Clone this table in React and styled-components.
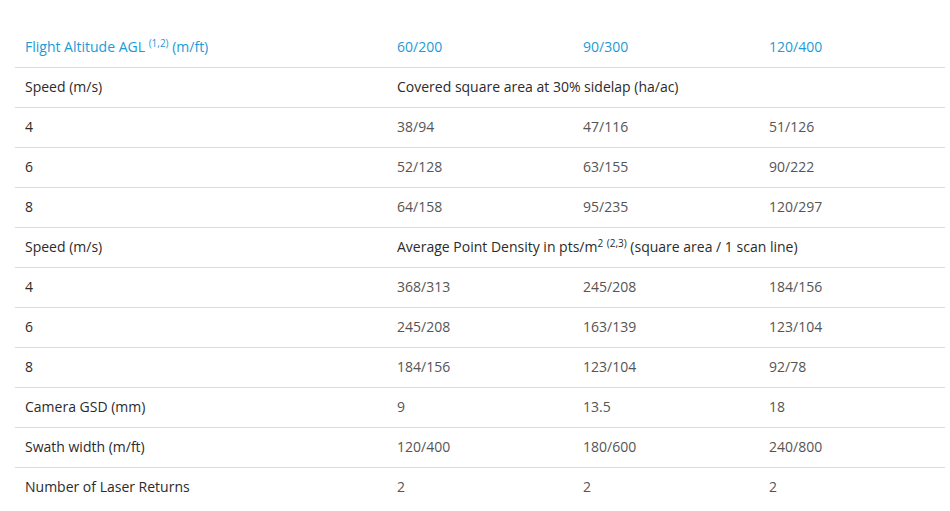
import React from 'react';
import styled, { createGlobalStyle } from 'styled-components';

const GlobalStyle = createGlobalStyle`
  body {
    margin: 0;
    background: #fff;
    font-family: "Open Sans", "Noto Sans", sans-serif;
  }
`;

const Page = styled.div`
  padding: 27px 5px 0 15px;
`;

const Table = styled.table`
  width: 930px;
  border-collapse: collapse;
  table-layout: fixed;
  font-size: 14px;
`;

const Col = styled.col`
  width: ${({ wide }) => (wide ? '372px' : '186px')};
`;

const Row = styled.tr`
  height: 40px;
  border-bottom: ${({ last }) => (last ? 'none' : '1px solid #dcdcdc')};
`;

const Cell = styled.td`
  padding: 0 10px 2px;
  vertical-align: middle;
  color: ${({ label }) => (label ? '#2b2b2b' : '#555')};
  white-space: nowrap;
`;

const HeadCell = styled.th`
  padding: 0 10px;
  text-align: left;
  font-weight: normal;
  color: #1b9bd7;
  vertical-align: middle;
`;

const Sup = styled.sup`
  font-size: 10px;
  vertical-align: 5px;
  line-height: 0;
`;

const sections = [
  {
    title: <>Covered square area at 30% sidelap (ha/ac)</>,
    rows: [
      ['4', '38/94', '47/116', '51/126'],
      ['6', '52/128', '63/155', '90/222'],
      ['8', '64/158', '95/235', '120/297'],
    ],
  },
  {
    title: (
      <>
        Average Point Density in pts/m<Sup>2</Sup> <Sup>(2,3)</Sup> (square area / 1 scan line)
      </>
    ),
    rows: [
      ['4', '368/313', '245/208', '184/156'],
      ['6', '245/208', '163/139', '123/104'],
      ['8', '184/156', '123/104', '92/78'],
    ],
  },
];

const extras = [
  ['Camera GSD (mm)', '9', '13.5', '18'],
  ['Swath width (m/ft)', '120/400', '180/600', '240/800'],
  ['Number of Laser Returns', '2', '2', '2'],
];

const App = () => (
  <Page>
    <GlobalStyle />
    <Table>
      <colgroup>
        <Col wide />
        <Col />
        <Col />
        <Col />
      </colgroup>
      <thead>
        <Row>
          <HeadCell>
            Flight Altitude AGL <Sup>(1,2)</Sup> (m/ft)
          </HeadCell>
          <HeadCell>60/200</HeadCell>
          <HeadCell>90/300</HeadCell>
          <HeadCell>120/400</HeadCell>
        </Row>
      </thead>
      <tbody>
        {sections.map((s, i) => (
          <React.Fragment key={i}>
            <Row>
              <Cell label>Speed (m/s)</Cell>
              <Cell label colSpan={3}>{s.title}</Cell>
            </Row>
            {s.rows.map((r) => (
              <Row key={r[0]}>
                <Cell label>{r[0]}</Cell>
                <Cell>{r[1]}</Cell>
                <Cell>{r[2]}</Cell>
                <Cell>{r[3]}</Cell>
              </Row>
            ))}
          </React.Fragment>
        ))}
        {extras.map((r, i) => (
          <Row key={r[0]} last={i === extras.length - 1}>
            <Cell label>{r[0]}</Cell>
            <Cell>{r[1]}</Cell>
            <Cell>{r[2]}</Cell>
            <Cell>{r[3]}</Cell>
          </Row>
        ))}
      </tbody>
    </Table>
  </Page>
);

export default App;
